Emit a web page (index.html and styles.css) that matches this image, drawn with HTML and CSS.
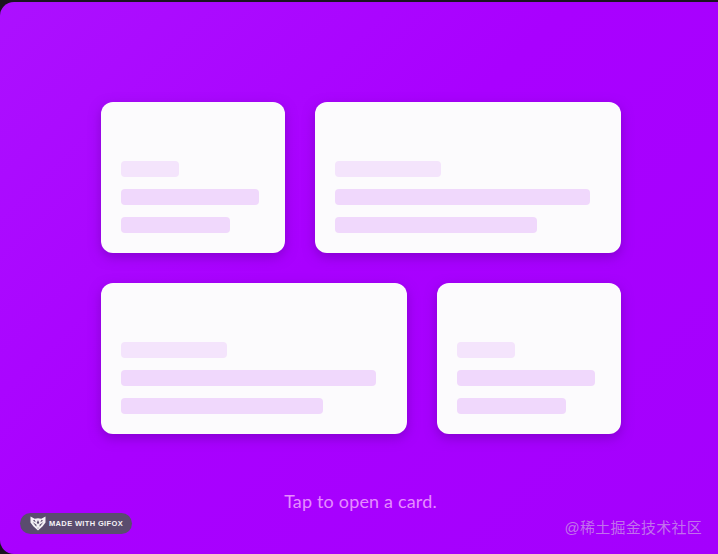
FILE: index.html
```html
<!DOCTYPE html>
<html lang="en">
<head>
    <meta charset="UTF-8">
    <meta name="viewport" content="width=device-width, initial-scale=1.0">
    <title>Cards</title>
    <link rel="stylesheet" href="styles.css">
</head>
<body>
    <div class="stage">
        <div class="card-grid">
            <div class="row row-first">
                <div class="card">
                    <div class="bar bar-title"></div>
                    <div class="bar bar-long"></div>
                    <div class="bar bar-mid"></div>
                </div>
                <div class="card">
                    <div class="bar bar-title"></div>
                    <div class="bar bar-long"></div>
                    <div class="bar bar-mid"></div>
                </div>
            </div>
            <div class="row row-second">
                <div class="card">
                    <div class="bar bar-title"></div>
                    <div class="bar bar-long"></div>
                    <div class="bar bar-mid"></div>
                </div>
                <div class="card">
                    <div class="bar bar-title"></div>
                    <div class="bar bar-long"></div>
                    <div class="bar bar-mid"></div>
                </div>
            </div>
        </div>

        <p class="caption">Tap to open a card.</p>

        <!-- Overlays from the recording tool and the site -->
        <div class="gifox-badge">
            <svg class="gifox-icon" viewBox="0 0 18 16" width="18" height="15">
                <path d="M1 .5 L5.5 3 L9 2.5 L12.5 3 L17 .5 L17 7 L14 11 L9 15.5 L4 11 L1 7 Z" fill="#f4f1f6"/>
                <path d="M3.2 6.5 L7.4 9.2 L7.2 11.4 Z M14.8 6.5 L10.6 9.2 L10.8 11.4 Z M9 4.2 L7.6 7.4 L9 8.6 L10.4 7.4 Z M5.2 4 L6.6 6.6 L3.6 5 Z M12.8 4 L11.4 6.6 L14.4 5 Z M8.2 12.4 L9.8 12.4 L9 13.6 Z" fill="#5a4c6e"/>
            </svg>
            <span>MADE WITH GIFOX</span>
        </div>
        <div class="watermark">@稀土掘金技术社区</div>
    </div>
</body>
</html>
```

FILE: styles.css
```css
html, body {
    margin: 0;
    height: 100%;
    background-color: #1a1420;
}

.stage {
    position: relative;
    box-sizing: border-box;
    height: 552px;
    margin-top: 2px;
    padding-top: 100px;
    border-radius: 14px 0 0 14px;
    background: linear-gradient(135deg, #ac10ff 0%, #a900ff 45%, #a400fd 100%);
    font-family: "Lato", sans-serif;
    overflow: hidden;
}

.card-grid {
    display: flex;
    flex-direction: column;
    gap: 30px;
    width: 520px;
    margin-left: 101px;
}

.row {
    display: grid;
    gap: 30px;
}

.row-first {
    grid-template-columns: 184px 306px;
}

.row-second {
    grid-template-columns: 306px 184px;
}

.card {
    display: flex;
    flex-direction: column;
    justify-content: flex-end;
    gap: 12px;
    box-sizing: border-box;
    height: 151px;
    padding: 0 20px 20px;
    border-radius: 12px;
    background-color: #fcfbfd;
    box-shadow: 0 4px 12px rgba(100, 0, 160, 0.5);
}

.bar {
    height: 16px;
    border-radius: 4px;
    background-color: #f0d8fc;
}

.bar-title {
    width: 58px;
    background-color: #f4e4fc;
}

.bar-long {
    width: 138px;
}

.bar-mid {
    width: 109px;
}

.row-first .card:last-child .bar-title,
.row-second .card:first-child .bar-title {
    width: 106px;
}

.row-first .card:last-child .bar-long,
.row-second .card:first-child .bar-long {
    width: 255px;
}

.row-first .card:last-child .bar-mid,
.row-second .card:first-child .bar-mid {
    width: 202px;
}

.caption {
    margin: 56px 0 0;
    padding-left: 3px;
    text-align: center;
    font-size: 18px;
    line-height: 22px;
    letter-spacing: 0.17px;
    color: #e58cff;
}

.gifox-badge {
    position: absolute;
    left: 20px;
    top: 511px;
    display: flex;
    align-items: center;
    gap: 2px;
    box-sizing: border-box;
    width: 112px;
    height: 21px;
    padding-left: 9px;
    border-radius: 11px;
    background-color: #5a4c6e;
    font-family: "Liberation Sans", sans-serif;
    font-size: 7.5px;
    font-weight: 700;
    letter-spacing: 0.35px;
    color: #f4f1f6;
}

.gifox-icon {
    flex-shrink: 0;
}

.watermark {
    position: absolute;
    right: 16px;
    top: 516px;
    font-family: "Liberation Sans", "Noto Sans CJK SC", sans-serif;
    font-size: 15px;
    line-height: 20px;
    letter-spacing: 0.25px;
    color: rgba(215, 190, 225, 0.6);
}
```
